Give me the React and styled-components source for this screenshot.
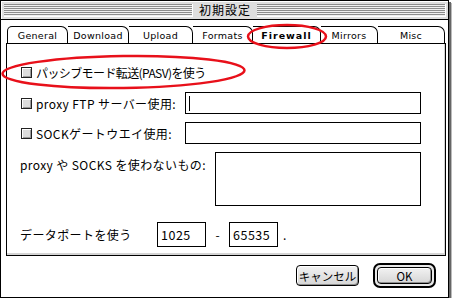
import React from 'react';
import styled, { createGlobalStyle } from 'styled-components';

const GlobalStyle = createGlobalStyle`
  body {
    margin: 0;
    background: #fff;
  }`

const Win = styled.div`
  position: relative;
  width: 449px;
  height: 298px;
  box-sizing: border-box;
  border: 1px solid #000;
  background: #fff;
  box-shadow: 2px 2px 0 #666, 3px 3px 0 #bbb;
  display: flex;
  flex-direction: column;
  font-family: "Noto Sans CJK JP", sans-serif;
  color: #000;`

const TitleBar = styled.div`
  height: 19px;
  box-sizing: border-box;
  border-bottom: 1px solid #000;
  background: #dedede;
  box-shadow: inset 1px 1px 0 #fff;
  display: flex;
  align-items: center;
  padding: 0 2px 0 3px;`

const Stripes = styled.div`
  flex: 1;
  height: 12px;
  background: repeating-linear-gradient(#8c8c8c 0 1px, #efefef 1px 2px);
  border-right: 1px solid #fff;
  border-bottom: 1px solid #fff;`

const Title = styled.span`
  padding: 0 6px;
  font-size: 12px;
  line-height: 18px;
  letter-spacing: 1px;`

const Body = styled.div`
  flex: 1;
  display: flex;
  flex-direction: column;
  padding: 6px 3px 0 5px;`

const TabRow = styled.div`
  display: flex;
  height: 17px;
  padding-left: 1px;`

const Tab = styled.div`
  width: ${p => p.w}px;
  box-sizing: border-box;
  border-top: 1px solid #000;
  border-right: 1px solid #000;
  border-left: ${p => p.first ? '1px solid #000' : 'none'};
  border-radius: ${p => p.first ? '5px' : '0'} 7px 0 0;
  display: flex;
  align-items: center;
  justify-content: center;
  font-family: "DejaVu Sans", sans-serif;
  font-size: 9.5px;
  font-weight: ${p => p.active ? 'bold' : 'normal'};
  letter-spacing: ${p => p.active ? '1px' : '0.3px'};
  background: #fff;`

const Panel = styled.div`
  width: 440px;
  height: 213px;
  box-sizing: border-box;
  border: 1px solid #000;
  box-shadow: inset -1px -2px 0 #d4d4d4;
  display: flex;
  flex-direction: column;
  padding: 17px 24px 0 13px;
  font-size: 12px;`

const Row = styled.div`
  display: flex;
  align-items: ${p => p.top ? 'flex-start' : 'center'};
  height: ${p => p.h}px;
  margin-top: ${p => p.mt}px;`

const Check = styled.span`
  width: 11px;
  height: 11px;
  box-sizing: border-box;
  border: 1px solid #222;
  background: #dcdcdc;
  box-shadow: inset 1px 1px 0 #fff, inset -1px -1px 0 #9a9a9a;
  margin: 0 4px 0 1px;
  flex: none;`

const Label = styled.span`
  white-space: nowrap;
  letter-spacing: ${p => p.ls ?? 0.4}px;
  width: ${p => p.w ? p.w + 'px' : 'auto'};
  margin-top: ${p => p.mt || 0}px;
  flex: none;`

const Field = styled.div`
  width: ${p => p.w}px;
  height: ${p => p.h}px;
  box-sizing: border-box;
  border: 1px solid #000;
  margin-left: ${p => p.auto ? 'auto' : '0'};
  display: flex;
  align-items: center;
  padding-left: 3px;
  font-size: 12.5px;
  letter-spacing: 0.5px;
  flex: none;`

const Caret = styled.span`
  width: 1px;
  height: 15px;
  background: #000;`

const Dash = styled.span`
  width: 23px;
  text-align: center;`

const Dot = styled.span`
  margin-left: 5px;`

const ButtonRow = styled.div`
  display: flex;
  justify-content: flex-end;
  align-items: center;
  gap: 14px;
  padding: 7px 9px 0 0;`

const Button = styled.div`
  width: ${p => p.w}px;
  height: ${p => p.h}px;
  box-sizing: border-box;
  border: 1px solid #000;
  border-radius: 4px;
  background: linear-gradient(#f2f2f2, #d6d6d6);
  box-shadow: inset 1px 1px 0 #fff, inset -1px -1px 0 #8f8f8f;
  display: flex;
  align-items: center;
  justify-content: center;
  white-space: nowrap;
  font-size: 11.5px;`

const DefaultRing = styled.div`
  padding: 2px;
  border: 2px solid #000;
  border-radius: 7px;
  background: #e8e8e8;`

const Marks = styled.svg`
  position: absolute;
  left: -1px;
  top: -1px;
  pointer-events: none;`

const tabs = [
  ['General', 61], ['Download', 61], ['Upload', 64], ['Formats', 60],
  ['Firewall', 68], ['Mirrors', 57], ['Misc', 67],
];

const App = () => {
  return (
    <>
      <GlobalStyle />
      <Win>
        <TitleBar>
          <Stripes /><Title>初期設定</Title><Stripes />
        </TitleBar>
        <Body>
          <TabRow>
            {tabs.map(([name, w], i) => (
              <Tab key={name} w={w} first={i === 0} active={name === 'Firewall'}>{name}</Tab>
            ))}
          </TabRow>
          <Panel>
            <Row h={22} mt={0}>
              <Check /><Label ls={-0.6}>パッシブモード転送(PASV)を使う</Label>
            </Row>
            <Row h={22} mt={9}>
              <Check /><Label>proxy FTP サーバー使用:</Label>
              <Field w={236} h={22} auto><Caret /></Field>
            </Row>
            <Row h={22} mt={8}>
              <Check /><Label>SOCKゲートウエイ使用:</Label>
              <Field w={236} h={22} auto />
            </Row>
            <Row h={54} mt={8} top>
              <Label mt={4}>proxy や SOCKS を使わないもの:</Label>
              <Field w={206} h={54} auto />
            </Row>
            <Row h={25} mt={16}>
              <Label w={137}>データポートを使う</Label>
              <Field w={49} h={25}>1025</Field>
              <Dash>-</Dash>
              <Field w={49} h={25}>65535</Field>
              <Dot>.</Dot>
            </Row>
          </Panel>
          <ButtonRow>
            <Button w={63} h={21}>キャンセル</Button>
            <DefaultRing><Button w={55} h={17}>OK</Button></DefaultRing>
          </ButtonRow>
        </Body>
        <Marks width="453" height="302" viewBox="0 0 453 302">
          <ellipse cx="287" cy="36.5" rx="39" ry="11.5" fill="none" stroke="#e8101a" strokeWidth="2.5" />
          <ellipse cx="123.5" cy="72" rx="121" ry="16" fill="none" stroke="#e8101a" strokeWidth="2.5" transform="rotate(-0.8 123.5 72)" />
        </Marks>
      </Win>
    </>
  );
}

export default App;
